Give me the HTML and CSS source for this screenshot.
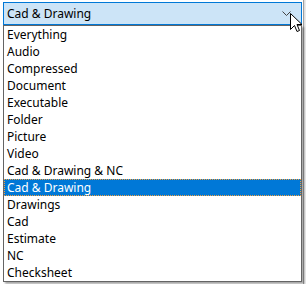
FILE: index.html
```html
<!DOCTYPE html>
<html>
<head>
<meta charset="utf-8">
<link rel="stylesheet" href="styles.css">
</head>
<body>
<div class="backdrop"></div>
<div class="combo">
  <div class="combo-box">
    <span class="combo-text">Cad &amp; Drawing</span>
    <svg class="chev" width="9" height="5" viewBox="0 0 9 5"><path d="M0.5 0.5 L4.5 4.5 L8.5 0.5" fill="none" stroke="#444" stroke-width="1"/></svg>
  </div>
  <ul class="list">
    <li>Everything</li>
    <li>Audio</li>
    <li>Compressed</li>
    <li>Document</li>
    <li>Executable</li>
    <li>Folder</li>
    <li>Picture</li>
    <li>Video</li>
    <li>Cad &amp; Drawing &amp; NC</li>
    <li class="sel">Cad &amp; Drawing</li>
    <li>Drawings</li>
    <li>Cad</li>
    <li>Estimate</li>
    <li>NC</li>
    <li>Checksheet</li>
  </ul>
</div>
<svg class="cursor" width="13" height="21" viewBox="0 0 13 21"><path d="M0.5 0.5 L0.5 16.5 L4.5 12.5 L7 18.5 L9.5 17.5 L7 11.5 L12 11.5 Z" fill="#fff" stroke="#000" stroke-width="1" stroke-linejoin="miter"/></svg>
</body>
</html>
```
FILE: styles.css
```css
html, body {
  margin: 0;
  padding: 0;
  width: 306px;
  height: 284px;
  overflow: hidden;
  background: #ffffff;
  font-family: "Noto Sans", "Liberation Sans", sans-serif;
  font-size: 12px;
  color: #000;
  position: relative;
}
.backdrop {
  position: absolute;
  right: 0;
  top: 0;
  width: 3px;
  height: 284px;
  background: linear-gradient(to right, #a0a0a0 0, #a0a0a0 1px, #d8d8d8 1px, #f0f0f0 3px);
}
.combo {
  position: relative;
  padding: 2px 0 0 3px;
  width: 299px;
}
.combo-box {
  border: 1px solid #0078d7;
  background: #cce4f7;
  display: flex;
  align-items: center;
  padding: 0 10px 0 3px;
  justify-content: space-between;
  box-sizing: border-box;
  height: 23px;
}
.combo-text {
  line-height: 17px;
}
.chev {
  display: block;
  margin-top: -1px;
}
.list {
  list-style: none;
  margin: 0;
  padding: 0;
  border: 1px solid #646464;
  background: #fff;
  box-shadow: 2px 2px 2px rgba(0,0,0,0.35);
}
.list li {
  height: 17px;
  line-height: 18px;
  padding-left: 3px;
  white-space: nowrap;
}
.list li.sel {
  background: #0078d7;
  color: #fff;
  outline: 1px dotted #f0a040;
  outline-offset: -1px;
}
.cursor {
  position: absolute;
  left: 290px;
  top: 13px;
}
```
